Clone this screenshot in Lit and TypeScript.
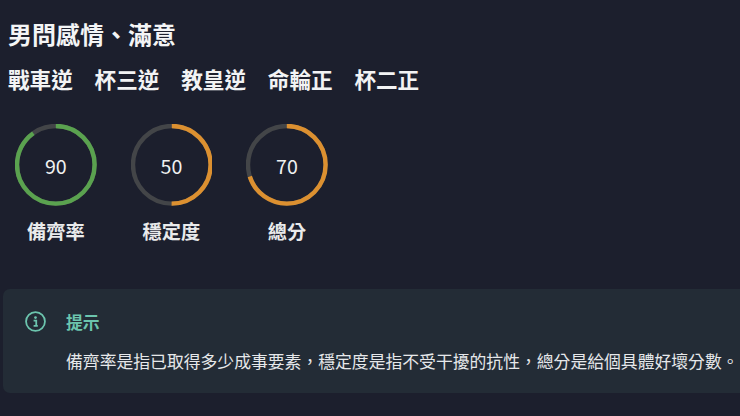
import { LitElement, html, css, svg } from "lit";
import { customElement } from "lit/decorators.js";

@customElement("app-root")
export class AppRoot extends LitElement {
  static styles = css`
    :host {
      display: block;
      width: 740px;
      height: 416px;
      overflow: hidden;
      background: #1c1f2d;
      color: #fff;
      font-family: "Noto Sans CJK TC", "Noto Sans", sans-serif;
    }
    .page {
      display: flex;
      flex-direction: column;
      padding: 16px 0 0 8px;
    }
    .title {
      font-size: 24px;
      line-height: 36px;
      font-weight: 700;
      color: #f4f5f6;
      white-space: nowrap;
    }
    .cards {
      display: flex;
      gap: 21.8px;
      margin-top: 10px;
      font-size: 21.6px;
      line-height: 34px;
      font-weight: 700;
      color: #f2f3f4;
      white-space: nowrap;
    }
    .gauges {
      display: flex;
      gap: 34px;
      margin-top: 28px;
      padding-left: 7px;
    }
    .gauge {
      display: flex;
      flex-direction: column;
      align-items: center;
      width: 81.6px;
    }
    .ring {
      position: relative;
      width: 81.6px;
      height: 81.6px;
    }
    .ring svg {
      display: block;
      width: 100%;
      height: 100%;
    }
    .value {
      position: absolute;
      inset: 2px 0 0 0;
      display: flex;
      align-items: center;
      justify-content: center;
      font-size: 19.6px;
      line-height: 28px;
      color: #f0f1f1;
    }
    .label {
      margin-top: 11px;
      font-size: 19.2px;
      line-height: 28px;
      font-weight: 700;
      color: #e9eaeb;
      white-space: nowrap;
    }
    .alert {
      display: flex;
      gap: 20px;
      margin: 44px 0 0 -5px;
      width: 737px;
      height: 104px;
      box-sizing: border-box;
      padding: 20px 0 0 22px;
      border-radius: 7px 0 0 7px;
      background: #232c36;
    }
    .icon {
      flex: none;
      width: 21px;
      height: 21px;
      margin-top: 2.5px;
      color: #6cc5ae;
    }
    .icon svg {
      display: block;
      width: 100%;
      height: 100%;
    }
    .alert-body {
      display: flex;
      flex-direction: column;
    }
    .alert-title {
      font-size: 16.8px;
      line-height: 26px;
      font-weight: 700;
      color: #6cc5ae;
    }
    .alert-text {
      margin-top: 13px;
      font-size: 16.82px;
      line-height: 25px;
      color: #e6e8ea;
      white-space: nowrap;
    }
  `;

  private ring(value: number, color: string) {
    const r = 38.8;
    const c = 2 * Math.PI * r;
    const dash = (value / 100) * c;
    return svg`<svg viewBox="0 0 81.6 81.6">
      <circle cx="40.8" cy="40.8" r="${r}" fill="none" stroke="#434548" stroke-width="4.4"></circle>
      <circle cx="40.8" cy="40.8" r="${r}" fill="none" stroke="${color}" stroke-width="4.4"
        stroke-dasharray="${dash} ${c}" transform="rotate(-90 40.8 40.8)"></circle>
    </svg>`;
  }

  render() {
    const gauges: [number, string, string][] = [
      [90, "#5aa24f", "備齊率"],
      [50, "#dc9030", "穩定度"],
      [70, "#dc9030", "總分"],
    ];
    const cards = ["戰車逆", "杯三逆", "教皇逆", "命輪正", "杯二正"];
    const note = "備齊率是指已取得多少成事要素\uFF0C穩定度是指不受干擾的抗性\uFF0C總分是給個具體好壞分數。";
    return html`<div class="page">
      <div class="title">男問感情、滿意</div>
      <div class="cards">${cards.map((c) => html`<span>${c}</span>`)}</div>
      <div class="gauges">
        ${gauges.map(
          ([v, col, l]) => html`<div class="gauge">
            <div class="ring">${this.ring(v, col)}<div class="value">${v}</div></div>
            <div class="label">${l}</div>
          </div>`
        )}
      </div>
      <div class="alert">
        <div class="icon">
          <svg viewBox="0 0 20 20" fill="none">
            <circle cx="10" cy="10" r="9" stroke="currentColor" stroke-width="1.7"></circle>
            <circle cx="10" cy="6.3" r="1.3" fill="currentColor"></circle>
            <path d="M8.2 9.2h2.5v4.6M8.2 14.2h4" stroke="currentColor" stroke-width="1.7"></path>
          </svg>
        </div>
        <div class="alert-body">
          <div class="alert-title">提示</div>
          <div class="alert-text">${note}</div>
        </div>
      </div>
    </div>`;
  }
}
